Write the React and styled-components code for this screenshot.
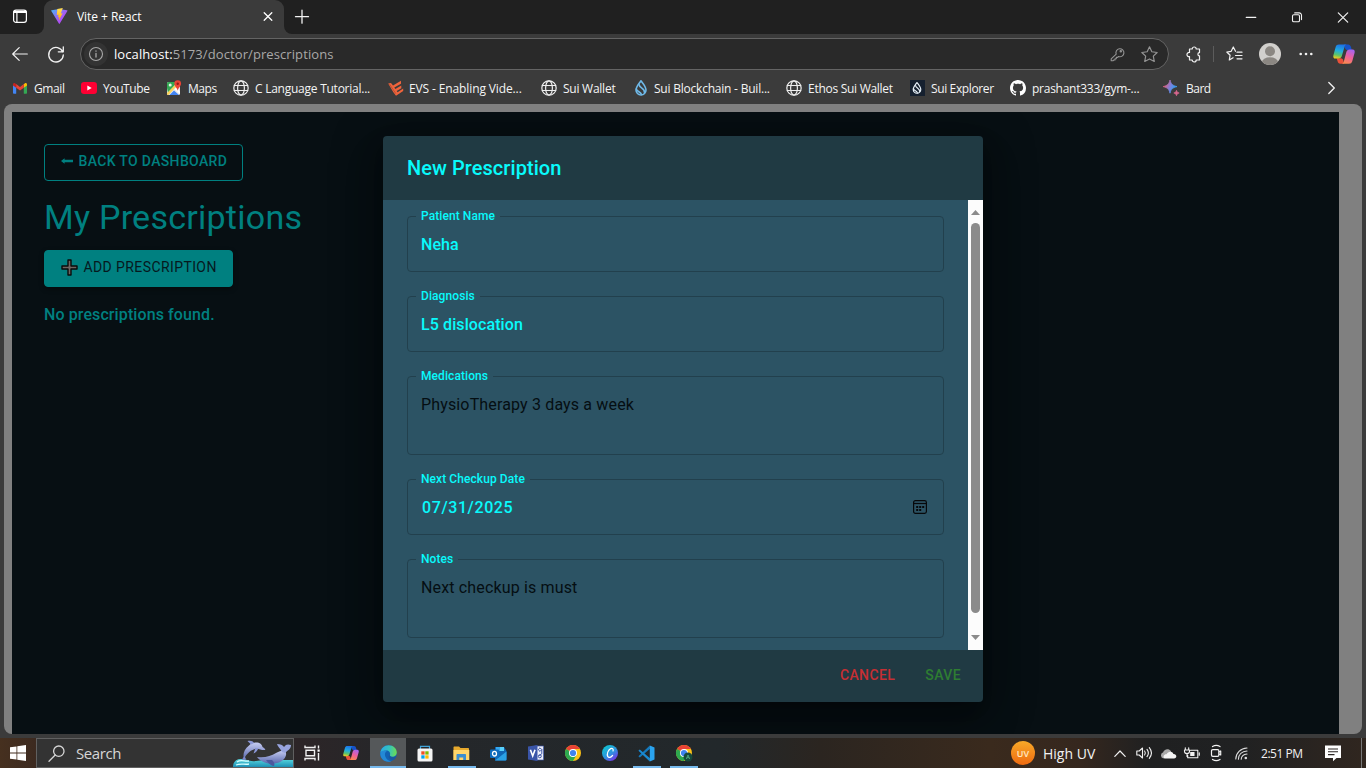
import React from "react";
import styled, { createGlobalStyle, css } from "styled-components";

const GlobalStyle = createGlobalStyle`
  *, *::before, *::after { box-sizing: border-box; }
  html, body, #root { margin: 0; padding: 0; height: 100%; overflow: hidden; }
  body { font-family: Roboto, "Liberation Sans", sans-serif; background: #3b3b3b; }
  svg { display: block; flex: none; overflow: visible; }
  button { font: inherit; cursor: pointer; }
`;

const uiFont = css`
  font-family: "Open Sans", "Noto Sans", sans-serif;
  white-space: nowrap;
`;

/* ---------- layout shells ---------- */
const Screen = styled.div`
  display: flex;
  flex-direction: column;
  width: 1366px;
  height: 768px;
  background: #3b3b3b;
`;

const Cell = styled.div`
  display: flex;
  align-items: center;
  justify-content: center;
  flex: none;
  width: ${(p) => p.$w}px;
  padding-left: ${(p) => p.$pl || 0}px;
  padding-right: ${(p) => p.$pr || 0}px;
  color: ${(p) => p.$color || "#f2f2f2"};
`;

/* ---------- tab strip ---------- */
const TabStrip = styled.div`
  display: flex;
  height: 34px;
  flex: none;
`;
const StripStart = styled.div`
  width: 44px;
  padding: 9px 0 0 12px;
  background: #202020;
  border-bottom-right-radius: 8px;
`;
const TabSlot = styled.div`
  width: 240px;
  background: linear-gradient(#202020 14px, #3b3b3b 14px);
`;
const Tab = styled.div`
  display: flex;
  align-items: center;
  height: 34px;
  padding: 0 11px 2px 7px;
  border-radius: 9px 9px 0 0;
  background: #3b3b3b;
  color: #fff;
`;
const TabTitle = styled.span`
  ${uiFont}
  flex: 1;
  margin-left: 9px;
  font-size: 12px;
  letter-spacing: -0.05px;
`;
const StripEnd = styled.div`
  display: flex;
  flex: 1;
  align-items: center;
  padding-bottom: 1px;
  background: #202020;
  border-bottom-left-radius: 8px;
`;
const Spacer = styled.div`
  flex: 1;
`;

/* ---------- toolbar ---------- */
const Toolbar = styled.div`
  display: flex;
  align-items: center;
  height: 40px;
  flex: none;
`;
const AddressBar = styled.div`
  ${uiFont}
  display: flex;
  align-items: center;
  width: 1089px;
  height: 32px;
  margin-left: 8px;
  padding-left: 3px;
  border: 1px solid #646464;
  border-radius: 16px;
  background: #292929;
  color: #a8a8a8;
  font-size: 13px;
`;
const InfoBadge = styled.span`
  display: flex;
  align-items: center;
  justify-content: center;
  width: 24px;
  height: 24px;
  margin-right: 6px;
  border-radius: 50%;
  background: #333;
`;
const Host = styled.span`
  color: #fff;
`;
const Url = styled.span`
  letter-spacing: 0.09px;
`;
const Divider = styled.div`
  width: 1px;
  height: 16px;
  background: #5c5c5c;
`;

/* ---------- bookmarks ---------- */
const BookmarkBar = styled.div`
  display: flex;
  align-items: center;
  height: 30px;
  flex: none;
  padding: 0 0 2px 12px;
`;
const Bookmark = styled.div`
  ${uiFont}
  display: flex;
  align-items: center;
  flex: none;
  width: ${(p) => p.$w}px;
  color: #f4f4f4;
  font-size: 12px;
  letter-spacing: ${(p) => p.$ls}px;
`;
const BookmarkIcon = styled.span`
  display: flex;
  align-items: center;
  justify-content: center;
  width: ${(p) => p.$w || 16}px;
  margin-right: 6px;
`;

/* ---------- page ---------- */
const Viewport = styled.main`
  display: flex;
  height: 630px;
  flex: none;
  margin: 0 4px;
  padding: 8px 23px 0 8px;
  border-radius: 8px;
  background: #808080;
`;
const Page = styled.div`
  display: flex;
  align-items: flex-start;
  width: 1327px;
  padding: 0 0 0 32px;
  background: #070f13;
  overflow: hidden;
`;
const Intro = styled.section`
  display: flex;
  flex-direction: column;
  align-items: flex-start;
  width: 339px;
  padding-top: 32px;
  color: #008080;
`;
const PageButton = styled.button`
  display: flex;
  align-items: center;
  width: ${(p) => p.$w}px;
  height: 37px;
  padding: 0 15px 3px 16px;
  border: 1px solid #008080;
  border-radius: 4px;
  background: ${(p) => (p.$filled ? "#008080" : "transparent")};
  color: ${(p) => (p.$filled ? "#06191e" : "#008080")};
  font-size: 14px;
  font-weight: ${(p) => (p.$filled ? 400 : 500)};
  letter-spacing: ${(p) => (p.$filled ? 0.4 : 0.34)}px;
  white-space: nowrap;
  box-shadow: ${(p) => (p.$filled ? "0 2px 5px rgba(0,0,0,.4)" : "none")};
`;
const ButtonLabel = styled.span`
  margin-left: 5.5px;
`;
const Heading = styled.h1`
  margin: 16px 0 12px;
  font-size: 34px;
  font-weight: 400;
  line-height: 41px;
  letter-spacing: 0.25px;
  white-space: nowrap;
`;
const Empty = styled.p`
  margin: 16px 0 0;
  font-size: 16px;
  font-weight: 500;
  line-height: 24px;
  letter-spacing: 0.1px;
`;

/* ---------- dialog ---------- */
const Dialog = styled.div`
  width: 600px;
  margin-top: 24px;
  border-radius: 4px;
  overflow: hidden;
  background: #203a43;
  box-shadow: 0 11px 15px -7px rgba(0, 0, 0, 0.2), 0 24px 38px 3px rgba(0, 0, 0, 0.14),
    0 9px 46px 8px rgba(0, 0, 0, 0.3);
`;
const DialogTitle = styled.h2`
  margin: 0;
  padding: 16px 24px;
  color: #08fafc;
  font-size: 20px;
  font-weight: 500;
  line-height: 32px;
  letter-spacing: 0.06px;
`;
const DialogBody = styled.div`
  display: flex;
  height: 450px;
  background: #2c5364;
`;
const Fields = styled.div`
  display: flex;
  flex-direction: column;
  gap: 19px;
  width: 585px;
  padding: 11px 24px 0;
`;
const FieldBox = styled.fieldset`
  height: ${(p) => (p.$tall ? 84 : 61)}px;
  margin: 0;
  padding: 0 16px 0 8px;
  border: 1px solid #22404d;
  border-radius: 4px;
`;
const FieldLabel = styled.legend`
  height: 11px;
  padding: 0 5px;
  color: #08fafc;
  font-size: 12px;
  font-weight: 500;
  line-height: 10px;
  letter-spacing: 0.08px;
`;
const FieldRow = styled.div`
  display: flex;
  align-items: center;
  justify-content: space-between;
  padding: 11px 0 0 5px;
`;
const FieldValue = styled.span`
  color: ${(p) => (p.$muted ? "#050e12" : "#08fafc")};
  font-size: 16px;
  font-weight: ${(p) => (p.$muted ? 400 : 500)};
  line-height: 23px;
  letter-spacing: ${(p) => p.$ls ?? 0.15}px;
  padding-left: ${(p) => p.$pl ?? 0}px;
`;
const PickerButton = styled.span`
  display: flex;
  padding-bottom: 2px;
`;
const ScrollTrack = styled.div`
  display: flex;
  flex-direction: column;
  align-items: center;
  width: 15px;
  padding-top: 10px;
  background: #fcfcfc;
`;
const ScrollThumb = styled.div`
  width: 9px;
  height: 390px;
  margin: 8px 0 22px;
  border-radius: 5px;
  background: #8b8b8b;
`;
const DialogActions = styled.div`
  display: flex;
  justify-content: flex-end;
  gap: 8px;
  height: 52px;
  padding: 7px 14px 8px 8px;
`;
const TextButton = styled.button`
  height: 36px;
  padding: 0 8px;
  margin-left: ${(p) => p.$ml || 0}px;
  border: 0;
  background: transparent;
  color: ${(p) => p.$color};
  font-size: 14px;
  font-weight: 500;
  letter-spacing: 0.4px;
`;

/* ---------- taskbar ---------- */
const Taskbar = styled.footer`
  display: flex;
  align-items: stretch;
  height: 30px;
  margin-top: 4px;
  background: linear-gradient(
    90deg,
    #46301f 0,
    #3c2a20 36px,
    #2c2527 300px,
    #25272a 400px,
    #22282b 720px,
    #2b2520 820px,
    #3a2a1d 990px,
    #35271e 1080px,
    #1f2021 1150px,
    #202122 1240px,
    #30261f 1366px
  );
`;
const SearchBox = styled.div`
  ${uiFont}
  display: flex;
  align-items: center;
  width: 258px;
  padding-left: 11px;
  border: 1px solid #606060;
  background: #333;
  color: #d6d6d6;
  font-size: 15px;
  letter-spacing: -0.4px;
`;
const SearchText = styled.span`
  flex: 1;
  margin-left: 11px;
`;
const TaskItem = styled.div`
  display: flex;
  align-items: center;
  justify-content: center;
  width: ${(p) => p.$w || 37}px;
  padding-left: ${(p) => p.$pl || 0}px;
  background: ${(p) => (p.$active ? "#55585a" : "transparent")};
  box-shadow: ${(p) => (p.$active ? "inset 0 -2px #76b9ed" : "none")};
`;
const RunningItem = styled(TaskItem)`
  background: linear-gradient(#76b9ed, #76b9ed) center bottom / 28px 2px no-repeat;
`;
const UvBadge = styled.span`
  ${uiFont}
  display: flex;
  align-items: center;
  justify-content: center;
  width: 24px;
  height: 24px;
  margin: 3px 8px 0 0;
  border-radius: 50%;
  background: linear-gradient(#f8a928, #ee6a10);
  color: #ffe9c4;
  font-size: 9px;
  font-weight: 600;
`;
const TrayText = styled.span`
  ${uiFont}
  display: flex;
  align-items: center;
  width: ${(p) => p.$w}px;
  color: #f2f2f2;
  font-size: ${(p) => p.$size}px;
  letter-spacing: ${(p) => p.$ls}px;
`;
const TrayEdge = styled.div`
  width: 1px;
  margin-right: 4px;
  background: #777;
`;

/* ---------- drawings ---------- */
const Line = ({ w = 16, h = w, vb, sw = 1.2, children, ...rest }) => (
  <svg
    width={w}
    height={h}
    viewBox={vb || `0 0 ${w} ${h}`}
    fill="none"
    stroke="currentColor"
    strokeWidth={sw}
    strokeLinecap="round"
    strokeLinejoin="round"
    {...rest}
  >
    {children}
  </svg>
);

const WorkspaceIcon = () => (
  <Line color="#fff" sw={1.2}>
    <rect x="1.600" y="1.100" width="12.800" height="12.300" rx="2.400" />
    <path d="M2.200 3h11.600" strokeWidth="2" />
    <path d="M4.900 4v9" />
  </Line>
);

const ViteIcon = () => (
  <svg width="17" height="16" viewBox="0 0 17 16">
    <defs>
      <linearGradient id="viteBody" x1="0" y1="0" x2="1" y2="1">
        <stop offset="0" stopColor="#41b8f8" />
        <stop offset=".55" stopColor="#a55cf0" />
        <stop offset="1" stopColor="#bd34fe" />
      </linearGradient>
      <linearGradient id="viteBolt" x1="0" y1="0" x2="0" y2="1">
        <stop offset="0" stopColor="#ffe05a" />
        <stop offset="1" stopColor="#ffa800" />
      </linearGradient>
    </defs>
    <path d="M.6 2.2 8.2 1 16 2.2a.5.5 0 0 1 .4.8L8.8 15.6a.5.5 0 0 1-.9 0L.3 3a.5.5 0 0 1 .3-.8Z" fill="url(#viteBody)" />
    <path d="m11.8.1-5.5 1-.5 6 1.8-.3-.6 2.5 1.2-.3-.4 3.5 3.8-7.2-1.8.3 2-5.5Z" fill="url(#viteBolt)" />
  </svg>
);

const GlobeIcon = () => (
  <Line sw={1.2} color="#eee">
    <circle cx="8" cy="8" r="7.2" />
    <ellipse cx="8" cy="8" rx="3.4" ry="7.2" />
    <path d="M1.3 5.5h13.4M1.3 10.5h13.4" />
  </Line>
);

const GmailIcon = () => (
  <svg width="14" height="11" viewBox="0 0 14 11">
    <path d="M0 1.6V10a.8.8 0 0 0 .8.8h2.4V4Z" fill="#4285f4" />
    <path d="M14 1.6V10a.8.8 0 0 1-.8.8h-2.4V4Z" fill="#34a853" />
    <path d="M10.8 1.1v3.6L14 2.4v-.8c0-1.400-1.300-1.900-2.200-1.200Z" fill="#fbbc04" />
    <path d="M3.200 1.100v3.600L0 2.400v-.8C0 .2 1.300-.3 2.200.400Z" fill="#c5221f" />
    <path d="M3.200 1.100 7 4l3.800-2.900v3.600L7 7.600 3.200 4.700Z" fill="#ea4335" />
  </svg>
);

const YouTubeIcon = () => (
  <svg width="16" height="12" viewBox="0 0 16 12">
    <rect width="16" height="12" rx="3.2" fill="#ff0033" />
    <path d="m6.300 3.500 4.400 2.500-4.400 2.500Z" fill="#fff" />
  </svg>
);

const MapsIcon = () => (
  <svg width="16" height="16" viewBox="0 0 16 16">
    <rect x="1" y="2" width="13" height="13" rx="1.500" fill="#e8eaed" />
    <path d="M1 8V3.500A1.500 1.500 0 0 1 2.500 2H9v3L2 13Z" fill="#34a853" />
    <path d="m1 13 8-8 1.500 1.500L2.500 15A1.500 1.500 0 0 1 1 13Z" fill="#fbd25a" />
    <path d="m3.500 15 4.500-4.500 5 4.500Z" fill="#4285f4" />
    <path d="m8.500 9 2-1.500 3.500 4V14Z" fill="#fff" />
    <circle cx="4.200" cy="5" r="1.500" fill="#e8f5e9" />
    <path d="M11.700.3a3.400 3.400 0 0 0-3.400 3.400c0 2.300 2.600 3.700 3.400 7 .8-3.300 3.400-4.700 3.400-7A3.400 3.400 0 0 0 11.700.3Z" fill="#ea4335" />
    <circle cx="11.700" cy="3.700" r="1.200" fill="#8c1d18" />
  </svg>
);

const EvsIcon = () => (
  <svg width="16" height="16" viewBox="0 0 16 16" fill="#f0643c">
    <path d="M.2 3.400 3 2.900l2 2.700L13 .8v2.900L6.300 7.600l1 1.400 6-3.400v2.700l-4.600 2.800.9 1.100L15.200 8.400v2.700L8 15.800 5.200 12 .2 3.400Z" />
    <path d="M1.500 4.200 7.800 13.600" stroke="#a7472f" strokeWidth=".7" fill="none" />
  </svg>
);

const SuiDrop = ({ color = "#6fb9e8", s = 16 }) => (
  <Line w={s} h={s} vb="0 0 16 16" color={color} sw={1.600}>
    <path d="M8 .8C10.500 4 13 6.700 13 10a5 5 0 0 1-10 0C3 6.700 5.500 4 8 .8Z" />
    <path d="M6.200 4.800C6 8 12 8 11.500 12.500M3.300 9c1 3 4.200 2.500 5.200 5.500" />
  </Line>
);

const SuiTile = styled.span`
  display: flex;
  align-items: center;
  justify-content: center;
  width: 15px;
  height: 16px;
  background: #15202f;
`;

const GithubIcon = () => (
  <svg width="16" height="16" viewBox="0 0 16 16" fill="#fff">
    <path d="M8 0C3.580 0 0 3.580 0 8c0 3.540 2.290 6.530 5.470 7.590.4.070.55-.17.55-.38 0-.19-.01-.82-.01-1.490-2.010.37-2.530-.49-2.690-.94-.09-.23-.48-.94-.82-1.130-.28-.15-.68-.52-.01-.53.63-.01 1.080.58 1.230.82.72 1.210 1.870.87 2.330.66.07-.52.28-.87.51-1.070-1.780-.2-3.640-.89-3.640-3.950 0-.87.31-1.590.82-2.150-.08-.2-.36-1.020.08-2.120 0 0 .67-.21 2.200.82.64-.18 1.320-.27 2-.27s1.360.09 2 .27c1.530-1.040 2.200-.82 2.200-.82.44 1.100.16 1.920.08 2.120.51.56.82 1.270.82 2.150 0 3.070-1.870 3.750-3.650 3.950.29.25.54.73.54 1.480 0 1.070-.01 1.930-.01 2.200 0 .21.15.46.55.38A8.010 8.010 0 0 0 16 8c0-4.420-3.580-8-8-8Z" />
  </svg>
);

const BardIcon = () => (
  <svg width="16" height="16" viewBox="0 0 16 16">
    <defs>
      <linearGradient id="bardStar" x1="0" y1=".3" x2="1" y2=".7">
        <stop offset=".1" stopColor="#e0607e" />
        <stop offset=".5" stopColor="#7d80dc" />
        <stop offset=".8" stopColor="#3b9bf0" />
      </linearGradient>
    </defs>
    <path d="M6 0c1 4 2.500 5.500 7 6.600C8.500 7.700 7 9.200 6 13.200 5 9.200 3.500 7.700-.8 6.600 3.500 5.500 5 4 6 0Z" fill="url(#bardStar)" stroke="url(#bardStar)" strokeWidth=".8" />
    <path d="M12.500 10.300c.4 1.600.9 2.100 2.700 2.700-1.800.6-2.300 1.100-2.700 2.700-.4-1.600-.9-2.100-2.700-2.700 1.800-.6 2.300-1.100 2.700-2.700Z" fill="#d9678f" stroke="#d9678f" strokeWidth=".7" />
  </svg>
);

const CopilotIcon = ({ s, id }) => (
  <svg width={s} height={s} viewBox="0 0 24 24">
    <defs>
      <linearGradient id={`${id}a`} x1=".5" y1="0" x2=".3" y2="1">
        <stop offset="0" stopColor="#1c73e8" />
        <stop offset=".45" stopColor="#21aede" />
        <stop offset=".75" stopColor="#5bc36b" />
        <stop offset="1" stopColor="#f3cd1d" />
      </linearGradient>
      <linearGradient id={`${id}b`} x1=".7" y1="0" x2=".3" y2="1">
        <stop offset="0" stopColor="#a664f0" />
        <stop offset=".5" stopColor="#ee5f9c" />
        <stop offset="1" stopColor="#fb8a4e" />
      </linearGradient>
    </defs>
    <path d="M12 1.500h4.500c1.700 0 2.500 1.200 3 2.700l1 3.300h-5c-1.500 0-2.200-1-2.700-2.500Z" fill="#1652c9" />
    <path d="M12 22.500H8c-1.800 0-2.600-1.200-3-2.700l-1-3.300h4.600c1.500 0 2.300 1 2.700 2.500Z" fill="#e9513a" />
    <path d="M6.500 1.500H15c-1.500.3-2 1.300-2.400 2.700L9.700 14c-.6 2-1.700 3-3.700 3H2.700C.5 17-.1 15.200.5 13L3 4.200C3.600 2.300 4.600 1.500 6.500 1.500Z" fill={`url(#${id}a)`} />
    <path d="M17.500 22.500H9.500c1.500-.3 2-1.300 2.400-2.700L14.500 10c.6-2 1.700-3 3.700-3h3.100c2.200 0 2.800 1.800 2.200 4L21 19.800c-.6 1.900-1.600 2.700-3.500 2.700Z" fill={`url(#${id}b)`} />
  </svg>
);

const AvatarIcon = () => (
  <svg width="22" height="22" viewBox="0 0 22 22">
    <defs>
      <clipPath id="avatarClip">
        <circle cx="11" cy="11" r="11" />
      </clipPath>
    </defs>
    <circle cx="11" cy="11" r="11" fill="#d2d0cd" />
    <circle cx="11" cy="8.300" r="5" fill="#8b8782" />
    <ellipse cx="11" cy="19" rx="8" ry="4.700" fill="#8b8782" clipPath="url(#avatarClip)" />
  </svg>
);

const STAR = "M8 .8 10.200 5.400l5 .7-3.600 3.500.9 5L8 12.200l-4.500 2.400.9-5L.8 6.100l5-.7Z";

const StarIcon = () => (
  <Line w={17} h={17} vb="0 0 16 16" color="#959595" sw={1.100}>
    <path d={STAR} />
  </Line>
);

const FavoritesIcon = () => (
  <Line w={17} h={16} vb="0 0 17 16" sw={1.200}>
    <path d="M9.500 5.300 7.300 1 5.200 5.300.8 6l3.300 3.200-.8 4.800 3.800-2.200" />
    <path d="M11 6.200h5M9.500 9.500H16M11 12.800h5" />
  </Line>
);

const KeyIcon = () => (
  <Line w={15} h={15} vb="0 0 15 15" color="#949494" sw={1.100}>
    <path d="M6.200 7.200a4 4 0 1 1 2.400 2.300l-1 .9H6.300v1.400H5V13H3.800L3 13.800H1.200v-2Z" />
    <circle cx="10.800" cy="4.300" r=".7" />
  </Line>
);

const PuzzleIcon = () => (
  <Line w={16} h={16} sw={1.200}>
    <path d="M3.500 3h2.700a2 2 0 0 1 4 0h3.300v3.600a1.500 1.500 0 0 0 0 3.200v4.200H10.200a2 2 0 0 1-4 0H3.500v-3.400a2.100 2.100 0 1 1 0-4.100Z" />
  </Line>
);

const DolphinArt = () => (
  <svg width="60" height="28" viewBox="0 0 60 28">
    <defs>
      <linearGradient id="dolphinSkin" x1="0" y1="0" x2="0" y2="1">
        <stop offset="0" stopColor="#c6cdf3" />
        <stop offset="1" stopColor="#5967ac" />
      </linearGradient>
      <linearGradient id="seaWater" x1="0" y1="0" x2="0" y2="1">
        <stop offset="0" stopColor="#59d8de" />
        <stop offset="1" stopColor="#1d8fb5" />
      </linearGradient>
    </defs>
    <path d="M0 28c0-5 3-8 8-8 6 0 8 3 15 2 10-2 24-1 37-1v7Z" fill="url(#seaWater)" />
    <path d="M11 20C9.500 16 11 10 16 6.500 17.500 4.500 20 3.500 23 3.500c4 0 6 2 6.500 4.500 1.800 1 2.800 2 2.800 3-3 .2-6.300-.5-8.300-1.500-5 .8-10 4-13 10.500Z" fill="url(#dolphinSkin)" />
    <path d="M18 5.500 14.500 2c3-.8 5.500 0 6.500 2ZM22.500 9l-2 5.500c3-1 4-3.500 5-5.500Z" fill="#8c98d8" />
    <path d="m11.500 17-3.300 4.500 5-1Z" fill="#7b88cc" />
    <path d="M24 18c8 1 14-1 19-4 4-2 7-3 9-2 3 3 0 10-8 12-9 2-16-1-20-6Z" fill="url(#dolphinSkin)" />
    <path d="M49 13c-2-4-4-5-5-8 3 0 6 1 7 3 2-3 4-3 7-2 0 4-3 5-6 8Z" fill="#98a5df" />
    <path d="M33 21c2 3 5 6 8 6 1-2 0-4-2-6Z" fill="#4b589e" />
    <path d="M4 23c4-3 8 0 12-1M3 26c5-2 9 0 13-1" stroke="#d6ffff" strokeWidth="1.300" fill="none" />
  </svg>
);

const WindowsIcon = () => (
  <svg width="16" height="16" viewBox="0 0 16 16" fill="#fff">
    <path d="M0 2.300 6.500 1.400v6.200H0ZM7.300 1.300 16 0v7.600H7.300ZM0 8.400h6.500v6.200L0 13.700ZM7.300 8.400H16V16l-8.700-1.300Z" />
  </svg>
);

const TaskViewIcon = () => (
  <Line w={17} h={16} vb="0 0 17 16" sw={1.400} color="#f1f1f1" strokeLinecap="butt" strokeLinejoin="miter">
    <path d="M1 .5v2h10v-2M1 15.500v-2h10v2M2 5.300h8.500v5.400H2ZM14.500.5v3M14.500 8v7.500" />
    <rect x="13.500" y="4.500" width="2.200" height="2.200" fill="#fff" stroke="none" />
  </Line>
);

const EdgeIcon = () => (
  <svg width="17" height="17" viewBox="0 0 17 17">
    <defs>
      <linearGradient id="edgeTop" x1="0" y1=".3" x2="1" y2=".4">
        <stop offset="0" stopColor="#2aa8e8" />
        <stop offset=".55" stopColor="#35c4b9" />
        <stop offset="1" stopColor="#6cdc53" />
      </linearGradient>
    </defs>
    <circle cx="8.500" cy="8.500" r="8.300" fill="#1262b3" />
    <path d="M.3 8C.6 3.400 4.300.2 8.600.2c4.900 0 8.200 3.600 8.200 7.300 0 2.500-1.800 4.300-4.300 4.300-1.700 0-3-.7-2.600-1.800.7-1.800-.2-4.600-3.500-4.600C3.500 5.400 1 6.500.3 8Z" fill="url(#edgeTop)" />
    <path d="M.3 8c1-2.300 4.500-3 6.600-2C5 7 4.500 9.300 5.300 11.500c.9 2.700 3 4.500 6 4.800C5 18.400-.3 13.500.3 8Z" fill="#2389d6" />
    <path d="M10 9.800c-.5 1.400 1 2.200 2.900 2.200 1.300 0 2.400-.4 3.100-1l.3.500c-.5 1.200-1.500 2.600-2.700 3.300-4 .8-6.600-3-3.600-5Z" fill="#1a58a0" />
  </svg>
);

const StoreIcon = () => (
  <svg width="16" height="17" viewBox="0 0 16 17">
    <path d="M3.500 4V1.300h9V4" fill="none" stroke="#42a6dc" strokeWidth="1.200" />
    <rect x=".5" y="3.500" width="15" height="13" rx="1.500" fill="#f4f4f4" />
    <rect x="4.300" y="6.300" width="3.300" height="3.300" fill="#f25022" />
    <rect x="8.300" y="6.300" width="3.300" height="3.300" fill="#7fba00" />
    <rect x="4.300" y="10.300" width="3.300" height="3.300" fill="#00a4ef" />
    <rect x="8.300" y="10.300" width="3.300" height="3.300" fill="#ffb900" />
  </svg>
);

const FolderIcon = () => (
  <svg width="17" height="15" viewBox="0 0 17 15">
    <path d="M.5 1.500C.5.900.9.500 1.500.500H6L7.500 2H15c.6 0 1 .4 1 1v11H.5Z" fill="#e7a92d" />
    <path d="M.5 4h15.800v10H.5Z" fill="#ffd66b" />
    <path d="M3.500 14V9c0-.6.4-1 1-1H12c.6 0 1 .4 1 1v5h-2.800v-2.500H6.300V14Z" fill="#3b8ed0" />
  </svg>
);

const OutlookIcon = () => (
  <svg width="17" height="15" viewBox="0 0 17 15">
    <path d="M5 1h9l2.500 4v8.500a1 1 0 0 1-1 1H5Z" fill="#1066b5" />
    <path d="M6 1h4v4H6Z" fill="#36a8ee" />
    <path d="M10 1h4v4h-4Z" fill="#58d0fa" />
    <path d="M16.500 5.500 5 14.500h10.500a1 1 0 0 0 1-1Z" fill="#2aa1e5" />
    <rect x="0" y="3.500" width="9" height="8.500" rx="1" fill="#0f6cbd" />
    <ellipse cx="4.500" cy="7.700" rx="2" ry="2.300" fill="none" stroke="#fff" strokeWidth="1.300" />
  </svg>
);

const VisioIcon = () => (
  <svg width="16" height="16" viewBox="0 0 16 16">
    <rect x="7" y="1" width="8.600" height="14" fill="#eef0fa" stroke="#3b54a4" strokeWidth=".7" />
    <path d="m12 2.800 1.800 1.800L12 6.400l-1.800-1.800ZM13.800 4.600v4.200L11 10.600" fill="none" stroke="#3b54a4" strokeWidth="1" />
    <circle cx="11.800" cy="11.300" r="1.500" fill="none" stroke="#3b54a4" strokeWidth="1" />
    <path d="M0 1.500 9.500 0v16L0 14.500Z" fill="#3a55a8" />
    <path d="m2.400 4.800 2.300 6.200L7 4.800" fill="none" stroke="#fff" strokeWidth="1.600" />
  </svg>
);

const ChromeIcon = ({ badge }) => (
  <svg width="16" height="16" viewBox="0 0 16 16">
    <circle cx="8" cy="8" r="8" fill="#fbc116" />
    <path d="M8 8 1.070 4A8 8 0 0 1 14.930 4H8Z" fill="#e94235" />
    <path d="M1.070 4A8 8 0 0 0 8 16l3.460-6L8 8Z" fill="#2da94f" />
    <circle cx="8" cy="8" r="4" fill="#fff" />
    <circle cx="8" cy="8" r="3.100" fill="#3f83f0" />
    {badge && (
      <g>
        <circle cx="12" cy="12" r="4.500" fill="#17493c" />
        <path d="m10.300 14 1.700-4 1.700 4m-2.800-1.300h2.200" fill="none" stroke="#4ca87e" strokeWidth=".9" />
      </g>
    )}
  </svg>
);

const CanvaIcon = () => (
  <svg width="16" height="16" viewBox="0 0 16 16">
    <defs>
      <linearGradient id="canvaDisc" x1=".1" y1=".1" x2=".8" y2="1">
        <stop offset="0" stopColor="#10c5d0" />
        <stop offset=".55" stopColor="#2f90e0" />
        <stop offset="1" stopColor="#7d2ae8" />
      </linearGradient>
    </defs>
    <circle cx="8" cy="8" r="8" fill="url(#canvaDisc)" />
    <path d="M11 6c.8-1.800-.6-3.200-2.300-2.400C6 4.800 4.600 9.300 5.700 11.400c1 1.800 3.600 1.100 4.900-1" fill="none" stroke="#fff" strokeWidth="1.200" strokeLinecap="round" />
  </svg>
);

const VsCodeIcon = () => (
  <svg width="17" height="17" viewBox="0 0 17 17">
    <path d="M12 3.800 1.800 12.500.4 11.300 11.800.6Z" fill="#1479bd" />
    <path d="M12 13.200 1.800 4.500.4 5.700 11.800 16.400Z" fill="#1a8ad2" />
    <path d="m11.800.4 4.700 2v12.200l-4.700 2Z" fill="#2aa4f0" />
  </svg>
);

const SpeakerIcon = () => (
  <Line w={17} h={14} vb="0 0 17 14" sw={1.100}>
    <path d="M.8 5h2.400L6.500 2v10L3.200 9H.8ZM8.600 5c.9 1.200.9 2.800 0 4M11 3.400c1.700 2.200 1.700 5 0 7.200M13.300 1.700c2.700 3.300 2.700 7.300 0 10.600" />
  </Line>
);

const CloudIcon = () => (
  <svg width="17" height="11" viewBox="0 0 17 11">
    <path d="M3.500 10.500a3.200 3.200 0 0 1-.3-6.200C4 1.500 8.300-.5 11.300 3.500L5 9Z" fill="#a9a9a9" />
    <path d="M4.500 10.500c-2-1.500-.5-4.500 2-4.200 1.600-3.500 6-3.300 6.900-.3 3.700-.2 3.900 4.500.6 4.500Z" fill="#f4f4f4" />
  </svg>
);

const BatteryIcon = () => (
  <Line w={16} h={13} vb="0 0 16 13" sw={1.100}>
    <path d="M6.500 3.300h7.300v7.400H3.700V8.300M15.300 5.700v2.600M1.300.8V3M4.700.8V3M.5 3h5v1.500C5.500 6 4.500 6.500 3 6.500S.5 6 .5 4.500ZM3 6.500v3" />
    <rect x="6.200" y="5" width="4.300" height="4" fill="currentColor" stroke="none" />
  </Line>
);

const MeetIcon = () => (
  <Line w={13} h={16} vb="0 0 13 16" sw={1.200}>
    <path d="M2.500 1.600C4.500.4 8 .4 10 1.600M2.500 14.400c2 1.200 5.500 1.200 7.500 0" />
    <rect x="1.500" y="4.600" width="7.400" height="6.800" rx="1.300" />
    <path d="m8.900 7 1.800-1v4l-1.800-1" />
  </Line>
);

const WifiIcon = () => (
  <Line w={13} h={13} vb="0 0 13 13" sw={1.100} color="#ddd">
    <path d="M.8 12C1 6 5.500 1.300 12 1M3.400 12.200C3.600 7.600 7 4.300 12 4M6.200 12.300C6.400 9.300 8.500 7.300 12 7" />
    <circle cx="10.800" cy="11" r="1.300" fill="currentColor" stroke="none" />
  </Line>
);

const NoteIcon = () => (
  <svg width="16" height="16" viewBox="0 0 16 16">
    <path d="M0 .5h16V13h-4.500L8 16.300V13H0Z" fill="#fff" />
    <path d="M3 4h10M3 6.800h10M3 9.600h6.500" stroke="#2a2523" strokeWidth="1.100" />
  </svg>
);

const CalendarIcon = () => (
  <svg width="14" height="14" viewBox="0 0 14 14" fill="none" stroke="#07080a" strokeWidth="1.200">
    <rect x=".6" y=".6" width="12.800" height="12.800" rx="1.800" />
    <path d="M.6 3.500h12.800" />
    <path d="M3.200 6.900h2M6.200 6.900h2M9.200 6.900h2M3.200 9.900h2M6.200 9.900h2" strokeWidth="2" />
  </svg>
);

const PlusGlyph = () => (
  <svg width="17" height="17" viewBox="0 0 17 17">
    <path d="M7 1h3v6h6v3h-6v6H7v-6H1V7h6Z" fill="#6e6460" stroke="#0a0a0a" strokeWidth="1.400" strokeLinejoin="round" />
  </svg>
);

const ArrowGlyph = () => (
  <svg width="12" height="6" viewBox="0 0 12 6" fill="#008080">
    <path d="M0 3 3.600.2v1.600H12v2.400H3.600v1.600Z" />
  </svg>
);

/* ---------- data ---------- */
const bookmarks = [
  { label: "Gmail", w: 69, ls: -0.4, icon: <GmailIcon /> },
  { label: "YouTube", w: 85, ls: -0.4, icon: <YouTubeIcon /> },
  { label: "Maps", w: 67, ls: -0.45, icon: <MapsIcon /> },
  { label: "C Language Tutorial...", w: 155, ls: -0.25, icon: <GlobeIcon /> },
  { label: "EVS - Enabling Vide...", w: 153, ls: -0.12, iw: 15, icon: <EvsIcon /> },
  { label: "Sui Wallet", w: 92, ls: -0.25, icon: <GlobeIcon /> },
  { label: "Sui Blockchain - Buil...", w: 153, ls: -0.22, iw: 15, icon: <SuiDrop /> },
  { label: "Ethos Sui Wallet", w: 123, ls: -0.28, icon: <GlobeIcon /> },
  { label: "Sui Explorer", w: 101, ls: -0.37, icon: <SuiTile><SuiDrop color="#e8f2fa" s={12} /></SuiTile> },
  { label: "prashant333/gym-...", w: 154, ls: -0.26, icon: <GithubIcon /> },
  { label: "Bard", w: 130, ls: -0.5, icon: <BardIcon /> },
];

const fields = [
  { label: "Patient Name", value: "Neha" },
  { label: "Diagnosis", value: "L5 dislocation" },
  { label: "Medications", value: "PhysioTherapy 3 days a week", tall: true },
  { label: "Next Checkup Date", value: "07/31/2025", date: true },
  { label: "Notes", value: "Next checkup is must", tall: true },
];

function BrowserChrome() {
  return (
    <>
      <TabStrip>
        <StripStart><WorkspaceIcon /></StripStart>
        <TabSlot>
          <Tab>
            <ViteIcon />
            <TabTitle>Vite + React</TabTitle>
            <Line w={10} sw={1.300}><path d="m1.200 1.700 7.600 7.600m0-7.600L1.200 9.300" /></Line>
          </Tab>
        </TabSlot>
        <StripEnd>
          <Cell $w={35}>
            <Line w={14} sw={1.300}><path d="M7 .2v13M.5 6.700h13" /></Line>
          </Cell>
          <Spacer />
          <Cell $w={46}><Line w={10}><path d="M.2 5.300h9.600" /></Line></Cell>
          <Cell $w={46}>
            <Line w={10} sw={1.100}>
              <rect x=".5" y="2.800" width="7" height="7" rx="1.300" />
              <path d="M2.700.9h4.500A2.300 2.300 0 0 1 9.500 3.200v4.400" />
            </Line>
          </Cell>
          <Cell $w={46}><Line w={10}><path d="m.3.8 9.400 9.400m0-9.400L.3 10.200" /></Line></Cell>
        </StripEnd>
      </TabStrip>
      <Toolbar>
        <Cell $w={40}><Line sw={1.200}><path d="M.7 8h14.600M7.200 1.600.7 8l6.500 6.400" /></Line></Cell>
        <Cell $w={32}>
          <Line sw={1.300}><path d="M14.800 6A7.300 7.300 0 1 0 15.300 9M15.300.8v5h-5" /></Line>
        </Cell>
        <AddressBar>
          <InfoBadge>
            <Line w={14} sw={1.100}>
              <circle cx="7" cy="7" r="6.500" />
              <path d="M7 6.300V10M7 4v.2" strokeWidth="1.300" />
            </Line>
          </InfoBadge>
          <Url><Host>localhost:</Host>5173/doctor/prescriptions</Url>
          <Spacer />
          <Cell $w={32}><KeyIcon /></Cell>
          <Cell $w={35} $pr={2}><StarIcon /></Cell>
        </AddressBar>
        <Cell $w={44} $pl={5}><PuzzleIcon /></Cell>
        <Divider />
        <Cell $w={40}><FavoritesIcon /></Cell>
        <Cell $w={32}><AvatarIcon /></Cell>
        <Cell $w={40}>
          <svg width="14" height="4" viewBox="0 0 14 4" fill="#f2f2f2">
            <circle cx="1.700" cy="2" r="1.300" /><circle cx="7" cy="2" r="1.300" /><circle cx="12.300" cy="2" r="1.300" />
          </svg>
        </Cell>
        <Cell $w={36}><CopilotIcon s={22} id="bar" /></Cell>
      </Toolbar>
      <BookmarkBar>
        {bookmarks.map((b) => (
          <Bookmark key={b.label} $w={b.w} $ls={b.ls}>
            <BookmarkIcon $w={b.iw}>{b.icon}</BookmarkIcon>
            {b.label}
          </Bookmark>
        ))}
        <Spacer />
        <Cell $w={70}><Line w={7} h={12} sw={1.300}><path d="M.8.500 6.300 6 .8 11.500" /></Line></Cell>
      </BookmarkBar>
    </>
  );
}

function PrescriptionDialog() {
  return (
    <Dialog role="dialog">
      <DialogTitle>New Prescription</DialogTitle>
      <DialogBody>
        <Fields>
          {fields.map((f) => (
            <FieldBox key={f.label} $tall={f.tall}>
              <FieldLabel>{f.label}</FieldLabel>
              <FieldRow>
                <FieldValue $muted={f.tall} $ls={f.date ? 0.6 : f.tall ? 0.15 : 0.1} $pl={f.date ? 1 : 0}>{f.value}</FieldValue>
                {f.date && <PickerButton><CalendarIcon /></PickerButton>}
              </FieldRow>
            </FieldBox>
          ))}
        </Fields>
        <ScrollTrack>
          <svg width="9" height="5" viewBox="0 0 9 5"><path d="M0 5 4.500 0 9 5Z" fill="#8b8b8b" /></svg>
          <ScrollThumb />
          <svg width="9" height="5" viewBox="0 0 9 5"><path d="M0 0 4.500 5 9 0Z" fill="#8b8b8b" /></svg>
        </ScrollTrack>
      </DialogBody>
      <DialogActions>
        <TextButton $color="#c62f33">CANCEL</TextButton>
        <TextButton $color="#2e7d32" $ml={6}>SAVE</TextButton>
      </DialogActions>
    </Dialog>
  );
}

function DesktopTaskbar() {
  return (
    <Taskbar>
      <Cell $w={36}><WindowsIcon /></Cell>
      <SearchBox>
        <Line w={17} h={17} sw={1.300}>
          <circle cx="10.800" cy="6.200" r="5.200" />
          <path d="M7.200 10 1 16.200" />
        </Line>
        <SearchText>Search</SearchText>
        <DolphinArt />
      </SearchBox>
      <TaskItem $w={36}><TaskViewIcon /></TaskItem>
      <TaskItem $w={40} $pl={2}><CopilotIcon s={16} id="dock" /></TaskItem>
      <TaskItem $w={36} $active><EdgeIcon /></TaskItem>
      <TaskItem><StoreIcon /></TaskItem>
      <RunningItem><FolderIcon /></RunningItem>
      <TaskItem><OutlookIcon /></TaskItem>
      <TaskItem><VisioIcon /></TaskItem>
      <TaskItem><ChromeIcon /></TaskItem>
      <TaskItem><CanvaIcon /></TaskItem>
      <RunningItem><VsCodeIcon /></RunningItem>
      <RunningItem><ChromeIcon badge /></RunningItem>
      <Spacer />
      <UvBadge>UV</UvBadge>
      <TrayText $w={65} $size={14} $ls={0}>High UV</TrayText>
      <Cell $w={24}><Line w={12} h={7}><path d="m.8 6.300 5.200-5.300 5.200 5.300" /></Line></Cell>
      <Cell $w={24}><SpeakerIcon /></Cell>
      <Cell $w={24}><CloudIcon /></Cell>
      <Cell $w={24}><BatteryIcon /></Cell>
      <Cell $w={24}><MeetIcon /></Cell>
      <Cell $w={25} $pl={1}><WifiIcon /></Cell>
      <Cell $w={8} />
      <TrayText $w={54} $size={12} $ls={-0.45}>2:51 PM</TrayText>
      <Cell $w={36}><NoteIcon /></Cell>
      <Cell $w={10} />
      <TrayEdge />
    </Taskbar>
  );
}

export default function App() {
  return (
    <Screen>
      <GlobalStyle />
      <BrowserChrome />
      <Viewport>
        <Page>
          <Intro>
            <PageButton $w={199}>
              <ArrowGlyph />
              <ButtonLabel>BACK TO DASHBOARD</ButtonLabel>
            </PageButton>
            <Heading>My Prescriptions</Heading>
            <PageButton $w={189} $filled>
              <PlusGlyph />
              <ButtonLabel>ADD PRESCRIPTION</ButtonLabel>
            </PageButton>
            <Empty>No prescriptions found.</Empty>
          </Intro>
          <PrescriptionDialog />
        </Page>
      </Viewport>
      <DesktopTaskbar />
    </Screen>
  );
}
